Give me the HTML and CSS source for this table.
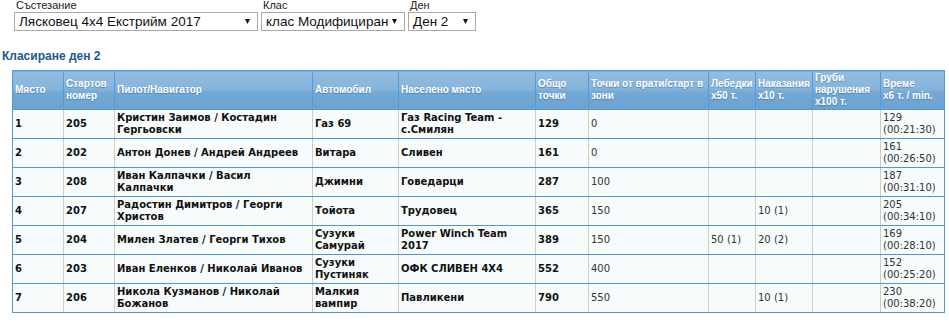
FILE: index.html
```html
<!DOCTYPE html>
<html lang="bg">
<head>
<meta charset="utf-8">
<title>Класиране ден 2</title>
<link rel="stylesheet" href="styles.css">
</head>
<body>
<div class="filters">
  <div class="field">
    <label class="field-label">Състезание</label>
    <div class="select select-event"><span>Лясковец 4x4 Екстрийм 2017</span><svg class="arrow" width="5" height="5" viewBox="0 0 5 5"><polygon points="0,0 5,0 2.5,5" fill="#111"/></svg></div>
  </div>
  <div class="field">
    <label class="field-label">Клас</label>
    <div class="select select-class"><span>клас Модифициран</span><svg class="arrow" width="5" height="5" viewBox="0 0 5 5"><polygon points="0,0 5,0 2.5,5" fill="#111"/></svg></div>
  </div>
  <div class="field">
    <label class="field-label">Ден</label>
    <div class="select select-day"><span>Ден 2</span><svg class="arrow" width="5" height="5" viewBox="0 0 5 5"><polygon points="0,0 5,0 2.5,5" fill="#111"/></svg></div>
  </div>
</div>

<h2 class="title">Класиране ден 2</h2>

<table class="results">
  <colgroup>
    <col class="c-place"><col class="c-num"><col class="c-pilot"><col class="c-car"><col class="c-town">
    <col class="c-total"><col class="c-gates"><col class="c-winch"><col class="c-pen"><col class="c-gross"><col class="c-time">
  </colgroup>
  <thead>
    <tr>
      <th>Място</th>
      <th>Стартов<br>номер</th>
      <th>Пилот/Навигатор</th>
      <th>Автомобил</th>
      <th>Населено място</th>
      <th>Общо<br>точки</th>
      <th>Точки от врати/старт в<br>зони</th>
      <th>Лебедки<br>x50 т.</th>
      <th>Наказания<br>x10 т.</th>
      <th>Груби<br>нарушения<br>x100 т.</th>
      <th>Време<br>x6 т. / min.</th>
    </tr>
  </thead>
  <tbody>
    <tr>
      <td class="b">1</td><td class="b">205</td><td class="b">Кристин Заимов / Костадин<br>Гергьовски</td><td class="b">Газ 69</td><td class="b">Газ Racing Team -<br>с.Смилян</td><td class="b">129</td><td>0</td><td></td><td></td><td></td><td>129<br>(00:21:30)</td>
    </tr>
    <tr>
      <td class="b">2</td><td class="b">202</td><td class="b">Антон Донев / Андрей Андреев</td><td class="b">Витара</td><td class="b">Сливен</td><td class="b">161</td><td>0</td><td></td><td></td><td></td><td>161<br>(00:26:50)</td>
    </tr>
    <tr>
      <td class="b">3</td><td class="b">208</td><td class="b">Иван Калпачки / Васил<br>Калпачки</td><td class="b">Джимни</td><td class="b">Говедарци</td><td class="b">287</td><td>100</td><td></td><td></td><td></td><td>187<br>(00:31:10)</td>
    </tr>
    <tr>
      <td class="b">4</td><td class="b">207</td><td class="b">Радостин Димитров / Георги<br>Христов</td><td class="b">Тойота</td><td class="b">Трудовец</td><td class="b">365</td><td>150</td><td></td><td>10 (1)</td><td></td><td>205<br>(00:34:10)</td>
    </tr>
    <tr>
      <td class="b">5</td><td class="b">204</td><td class="b">Милен Златев / Георги Тихов</td><td class="b">Сузуки<br>Самурай</td><td class="b">Power Winch Team<br>2017</td><td class="b">389</td><td>150</td><td>50 (1)</td><td>20 (2)</td><td></td><td>169<br>(00:28:10)</td>
    </tr>
    <tr>
      <td class="b">6</td><td class="b">203</td><td class="b">Иван Еленков / Николай Иванов</td><td class="b">Сузуки<br>Пустиняк</td><td class="b">ОФК СЛИВЕН 4X4</td><td class="b">552</td><td>400</td><td></td><td></td><td></td><td>152<br>(00:25:20)</td>
    </tr>
    <tr>
      <td class="b">7</td><td class="b">206</td><td class="b">Никола Кузманов / Николай<br>Божанов</td><td class="b">Малкия<br>вампир</td><td class="b">Павликени</td><td class="b">790</td><td>550</td><td></td><td>10 (1)</td><td></td><td>230<br>(00:38:20)</td>
    </tr>
  </tbody>
</table>
</body>
</html>
```

FILE: styles.css
```css
html, body {
  margin: 0;
  padding: 0;
  background: #ffffff;
}

body {
  font-family: "Liberation Sans", Arial, sans-serif;
  color: #222;
}

.filters {
  display: flex;
  gap: 3px;
  padding-left: 14px;
  margin-top: -1px;
}

.field {
  display: flex;
  flex-direction: column;
  gap: 1px;
}

.field-label {
  font-size: 11px;
  line-height: 12px;
  padding-left: 2px;
  color: #222;
}

.select {
  box-sizing: border-box;
  height: 19px;
  border: 1px solid #a9a9a9;
  background: #fff;
  display: flex;
  align-items: center;
  justify-content: space-between;
  padding: 0 7px 0 4px;
  font-size: 13.5px;
  line-height: 16px;
  color: #111;
  white-space: nowrap;
  overflow: hidden;
}

.select-event { width: 244px; }
.select-class { width: 144px; }
.select-day { width: 68px; }

.arrow {
  flex: none;
}

.title {
  margin: 18px 0 7px 0;
  padding-left: 2px;
  font-size: 12px;
  line-height: 14px;
  font-weight: bold;
  color: #22588d;
}

.results {
  margin-left: 12px;
  width: 932px;
  border-collapse: collapse;
  table-layout: fixed;
}

.c-place { width: 51px; }
.c-num { width: 51px; }
.c-pilot { width: 198px; }
.c-car { width: 86px; }
.c-town { width: 137px; }
.c-total { width: 53px; }
.c-gates { width: 120px; }
.c-winch { width: 47px; }
.c-pen { width: 57px; }
.c-gross { width: 68px; }
.c-time { width: 64px; }

.results th {
  background: linear-gradient(to bottom, #92bde0 0%, #86b4dc 45%, #74a9d4 55%, #6aa2d0 100%);
  color: #fff;
  font-family: "Liberation Sans", Arial, sans-serif;
  font-size: 10px;
  line-height: 12px;
  font-weight: bold;
  text-align: left;
  vertical-align: middle;
  padding: 1px 2px;
  border: 1px solid #4f9bdd;
  white-space: nowrap;
  text-shadow: 0 1px 1px rgba(40, 80, 130, 0.45);
  height: 36px;
}

.results td {
  background: #f8fbfb;
  font-family: "DejaVu Sans", Verdana, sans-serif;
  font-size: 10px;
  line-height: 12px;
  color: #333;
  text-align: left;
  vertical-align: middle;
  padding: 2px 2px;
  height: 24px;
  border-left: 1px solid #cccccc;
  border-right: 1px solid #cccccc;
  border-bottom: 1px solid #5096d6;
  white-space: nowrap;
  overflow: hidden;
}

.results td:first-child { border-left-color: #5096d6; }
.results td:last-child { border-right-color: #5096d6; }

.results td.b {
  font-weight: bold;
  color: #111;
}
```
